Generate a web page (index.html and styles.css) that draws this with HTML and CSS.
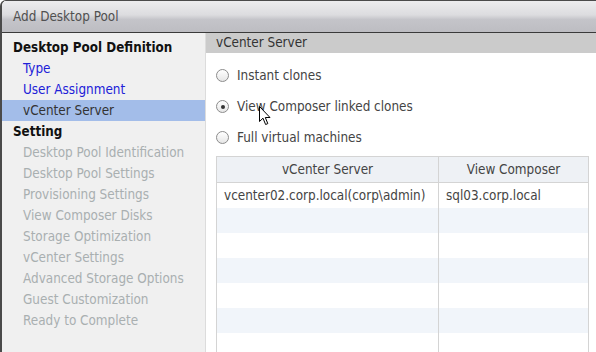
FILE: index.html
```html
<!DOCTYPE html>
<html>
<head>
    <title>Add Desktop Pool</title>
    <meta charset="UTF-8">
    <link rel="stylesheet" href="styles.css">
</head>
<body>
    <div class="window">
        <div class="titlebar">Add Desktop Pool</div>
        <div class="window-body">
            <div class="steps">
                <div class="step-group">Desktop Pool Definition</div>
                <div class="step link">Type</div>
                <div class="step link">User Assignment</div>
                <div class="step current">vCenter Server</div>
                <div class="step-group">Setting</div>
                <div class="step disabled">Desktop Pool Identification</div>
                <div class="step disabled">Desktop Pool Settings</div>
                <div class="step disabled">Provisioning Settings</div>
                <div class="step disabled">View Composer Disks</div>
                <div class="step disabled">Storage Optimization</div>
                <div class="step disabled">vCenter Settings</div>
                <div class="step disabled">Advanced Storage Options</div>
                <div class="step disabled">Guest Customization</div>
                <div class="step disabled">Ready to Complete</div>
            </div>

            <div class="content">
                <div class="section-head">vCenter Server</div>
                <div class="options">
                    <label class="option"><input type="radio" name="clone"> Instant clones</label>
                    <label class="option"><input type="radio" name="clone" checked> View Composer linked clones</label>
                    <label class="option"><input type="radio" name="clone"> Full virtual machines</label>
                </div>
                <table class="grid">
                    <thead>
                        <tr><th class="col-vc">vCenter Server</th><th>View Composer</th></tr>
                    </thead>
                    <tbody>
                        <tr><td>vcenter02.corp.local(corp\admin)</td><td>sql03.corp.local</td></tr>
                        <tr><td></td><td></td></tr>
                        <tr><td></td><td></td></tr>
                        <tr><td></td><td></td></tr>
                        <tr><td></td><td></td></tr>
                        <tr><td></td><td></td></tr>
                        <tr><td></td><td></td></tr>
                    </tbody>
                </table>
            </div>
        </div>

        <!-- mouse pointer -->
        <svg class="cursor" width="13" height="20" viewBox="0 0 13 20">
            <path d="M0.5 0.5 L0.5 15.5 L4 12.2 L6.6 18.5 L8.8 17.6 L6.3 11.5 L11 11.5 Z" fill="#fff" stroke="#000" stroke-width="1" stroke-linejoin="miter"/>
        </svg>
    </div>
</body>
</html>
```

FILE: styles.css
```css
html, body {
    margin: 0;
    padding: 0;
    overflow: hidden;
}
body {
    font-family: 'DejaVu Sans Condensed', 'DejaVu Sans', sans-serif;
    font-size: 13.4px;
    background-color: #ffffff;
}
.window {
    position: relative;
    width: 620px;
    height: 360px;
    border-top: 1px solid #4a4a4a;
    border-left: 2px solid #4a4a4a;
    border-top-left-radius: 6px;
    overflow: hidden;
    background-color: #ffffff;
}
.titlebar {
    height: 31px;
    line-height: 31px;
    padding-left: 11px;
    color: #505050;
    font-size: 13.4px;
    background: linear-gradient(to bottom, #ececee 0%, #dcdcdf 45%, #c4c4c9 60%, #bdbdc2 100%);
    border-bottom: 1px solid #3a3a3a;
}
.window-body {
    display: flex;
    height: 330px;
}
.steps {
    width: 203px;
    flex-shrink: 0;
    padding-top: 4px;
    background-color: #f0f0f0;
    border-right: 1px solid #dcdcdc;
}
.step-group,
.step {
    height: 21px;
    line-height: 21px;
    white-space: nowrap;
}
.step-group {
    padding-left: 11px;
    font-weight: bold;
    color: #111;
    font-size: 13.3px;
}
.step {
    padding-left: 21px;
}
.step.link {
    color: #2020d8;
}
.step.current {
    background-color: #a3bde9;
    color: #333;
}
.step.disabled {
    color: #a9afb0;
}
.content {
    flex: 1;
}
.section-head {
    height: 20px;
    line-height: 20px;
    padding-left: 10px;
    background-color: #cbcbcb;
    color: #333;
}
.options {
    padding: 7px 0 0 10px;
}
.option {
    display: flex;
    align-items: center;
    height: 31px;
    color: #444;
}
.option input {
    appearance: none;
    -webkit-appearance: none;
    width: 13px;
    height: 13px;
    margin: 0 8px 0 0;
    border: 1px solid #8c8c8c;
    border-radius: 50%;
    background: linear-gradient(to bottom, #ffffff, #e6e6e6);
    box-sizing: border-box;
    display: flex;
    align-items: center;
    justify-content: center;
}
.option input:checked::after {
    content: '';
    width: 4px;
    height: 4px;
    border-radius: 50%;
    background-color: #333;
}
.grid {
    margin: 3px 0 0 10px;
    width: 373px;
    border-collapse: collapse;
    table-layout: fixed;
    color: #444;
}
.grid th {
    height: 25px;
    padding: 0;
    font-weight: normal;
    background-color: #eef1f5;
    border: 1px solid #d4d4d4;
    color: #444;
}
.grid th.col-vc {
    width: 221px;
}
.grid td {
    height: 25px;
    padding: 0 0 0 7px;
    border-left: 1px solid #d4d4d4;
    border-right: 1px solid #d4d4d4;
    white-space: nowrap;
    overflow: hidden;
}
.grid tbody tr:nth-child(even) td {
    background-color: #f1f5fa;
}
.cursor {
    position: absolute;
    left: 257px;
    top: 105px;
}
```
